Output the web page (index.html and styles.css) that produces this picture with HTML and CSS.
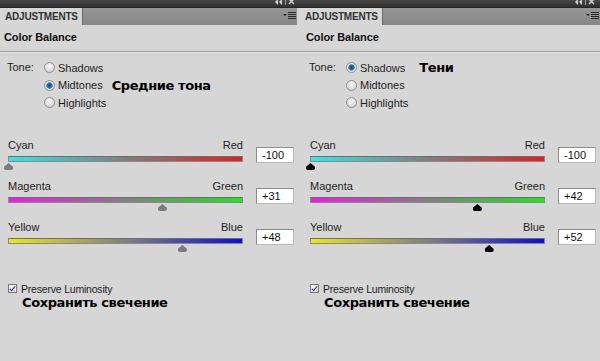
FILE: index.html
```html
<!DOCTYPE html>
<html>

<head>
	<meta charset="UTF-8">
	<title>Color Balance</title>
	<link rel="stylesheet" href="styles.css">
</head>

<body>
	<div class="screens">
		<!-- левая панель: средние тона -->
		<section class="panel panel-left">
			<div class="titlebar">
				<svg class="win-icons" width="24" height="7" viewBox="0 0 24 7">
					<path d="M4 0 L1 -3 L4 -6 Z M8 0 L5 -3 L8 -6 Z" fill="#d0d0d0" transform="translate(0 5)" />
					<rect x="11" y="0" width="1" height="5" fill="#9a9a9a" />
					<path d="M15 0 L20 5 M20 0 L15 5" stroke="#d0d0d0" stroke-width="1.4" transform="translate(0 -1)" />
				</svg>
			</div>
			<div class="tabrow">
				<div class="tab">ADJUSTMENTS</div>
				<div class="tabfill">
					<svg class="menu-icon" width="13" height="9" viewBox="0 0 13 9">
						<path d="M0 2 L4 2 L2 4 Z" fill="#222" />
						<rect x="5" y="0" width="8" height="1" fill="#2a2a2a" />
						<rect x="5" y="2" width="8" height="1" fill="#2a2a2a" />
						<rect x="5" y="4" width="8" height="1" fill="#2a2a2a" />
						<rect x="5" y="6" width="8" height="1" fill="#2a2a2a" />
					</svg>
				</div>
			</div>
			<div class="content">
				<h2 class="heading">Color Balance</h2>
				<div class="separator"></div>

				<div class="tone">
					<span class="tone-label">Tone:</span>
					<div class="tone-options">
						<label class="option"><span class="radio"></span>Shadows</label>
						<label class="option"><span class="radio checked"></span>Midtones<span class="hint">Средние тона</span></label>
						<label class="option"><span class="radio"></span>Highlights</label>
					</div>
				</div>

				<div class="slider">
					<div class="slider-main">
						<div class="ends"><span>Cyan</span><span>Red</span></div>
						<div class="bar bar-cr"></div>
						<div class="track"><span class="thumb" style="left: 0%"></span></div>
					</div>
					<div class="value">-100</div>
				</div>
				<div class="slider">
					<div class="slider-main">
						<div class="ends"><span>Magenta</span><span>Green</span></div>
						<div class="bar bar-mg"></div>
						<div class="track"><span class="thumb" style="left: 65.5%"></span></div>
					</div>
					<div class="value">+31</div>
				</div>
				<div class="slider">
					<div class="slider-main">
						<div class="ends"><span>Yellow</span><span>Blue</span></div>
						<div class="bar bar-yb"></div>
						<div class="track"><span class="thumb" style="left: 74%"></span></div>
					</div>
					<div class="value">+48</div>
				</div>

				<label class="preserve"><span class="checkbox"></span>Preserve Luminosity</label>
				<p class="translation">Сохранить свечение</p>
			</div>
		</section>

		<!-- правая панель: тени -->
		<section class="panel panel-right">
			<div class="titlebar">
				<svg class="win-icons" width="24" height="7" viewBox="0 0 24 7">
					<path d="M4 0 L1 -3 L4 -6 Z M8 0 L5 -3 L8 -6 Z" fill="#d0d0d0" transform="translate(0 5)" />
					<rect x="11" y="0" width="1" height="5" fill="#9a9a9a" />
					<path d="M15 0 L20 5 M20 0 L15 5" stroke="#d0d0d0" stroke-width="1.4" transform="translate(0 -1)" />
				</svg>
			</div>
			<div class="tabrow">
				<div class="tab">ADJUSTMENTS</div>
				<div class="tabfill">
					<svg class="menu-icon" width="13" height="9" viewBox="0 0 13 9">
						<path d="M0 2 L4 2 L2 4 Z" fill="#222" />
						<rect x="5" y="0" width="8" height="1" fill="#2a2a2a" />
						<rect x="5" y="2" width="8" height="1" fill="#2a2a2a" />
						<rect x="5" y="4" width="8" height="1" fill="#2a2a2a" />
						<rect x="5" y="6" width="8" height="1" fill="#2a2a2a" />
					</svg>
				</div>
			</div>
			<div class="content">
				<h2 class="heading">Color Balance</h2>
				<div class="separator"></div>

				<div class="tone">
					<span class="tone-label">Tone:</span>
					<div class="tone-options">
						<label class="option"><span class="radio checked"></span>Shadows<span class="hint">Тени</span></label>
						<label class="option"><span class="radio"></span>Midtones</label>
						<label class="option"><span class="radio"></span>Highlights</label>
					</div>
				</div>

				<div class="slider">
					<div class="slider-main">
						<div class="ends"><span>Cyan</span><span>Red</span></div>
						<div class="bar bar-cr"></div>
						<div class="track"><span class="thumb dark" style="left: 0%"></span></div>
					</div>
					<div class="value">-100</div>
				</div>
				<div class="slider">
					<div class="slider-main">
						<div class="ends"><span>Magenta</span><span>Green</span></div>
						<div class="bar bar-mg"></div>
						<div class="track"><span class="thumb dark" style="left: 71%"></span></div>
					</div>
					<div class="value">+42</div>
				</div>
				<div class="slider">
					<div class="slider-main">
						<div class="ends"><span>Yellow</span><span>Blue</span></div>
						<div class="bar bar-yb"></div>
						<div class="track"><span class="thumb dark" style="left: 76%"></span></div>
					</div>
					<div class="value">+52</div>
				</div>

				<label class="preserve"><span class="checkbox"></span>Preserve Luminosity</label>
				<p class="translation">Сохранить свечение</p>
			</div>
		</section>
	</div>
</body>

</html>
```

FILE: styles.css
```css
body {
	margin: 0;
	background: #d6d6d6;
	font-family: "Liberation Sans", Arial, sans-serif;
	font-size: 11px;
	color: #1e1e1e;
}

.screens {
	display: flex;
	width: 600px;
	height: 361px;
	overflow: hidden;
}

.panel {
	width: 300px;
	flex: none;
	background: #d6d6d6;
}

/* верхняя тёмная полоса */
.titlebar {
	height: 7px;
	background: linear-gradient(#474747, #2f2f2f);
	display: flex;
	justify-content: flex-end;
	overflow: hidden;
}

.win-icons {
	margin-right: 2px;
}

.tabrow {
	height: 18px;
	display: flex;
	border-top: 1px solid #262626;
	box-sizing: border-box;
}

.tab {
	width: 82px;
	flex: none;
	background: #d6d6d6;
	font-weight: bold;
	font-size: 10px;
	color: #333;
	padding-left: 5px;
	line-height: 17px;
	box-sizing: border-box;
	letter-spacing: -0.2px;
	white-space: nowrap;
	overflow: hidden;
}

.tabfill {
	flex: 1;
	background: linear-gradient(#969696, #878787);
	border-left: 1px solid #6a6a6a;
	display: flex;
	justify-content: flex-end;
	align-items: center;
}

.panel-left .tabfill {
	margin-right: 3px;
}

.menu-icon {
	margin-right: 1px;
}

.panel-right .content {
	padding-left: 2px;
}

.heading {
	margin: 0;
	padding: 6px 0 0 4px;
	height: 20px;
	font-size: 11px;
	line-height: 12px;
	font-weight: bold;
	color: #111;
	letter-spacing: -0.1px;
}

.separator {
	height: 1px;
	background: #9c9c9c;
	border-bottom: 1px solid #e6e6e6;
	margin: 0 0 6px 0;
}

.panel-right .separator {
	margin-left: -2px;
}

/* выбор тона */
.tone {
	display: flex;
	padding-left: 7px;
	height: 80px;
}

.tone-label {
	width: 37px;
	line-height: 17px;
}

.tone-options {
	display: flex;
	flex-direction: column;
}

.option {
	display: flex;
	align-items: center;
	height: 17.5px;
}

.radio {
	width: 11px;
	height: 11px;
	border-radius: 50%;
	box-sizing: border-box;
	border: 1px solid #8f8f8f;
	background: radial-gradient(circle at 50% 35%, #fafafa, #d8d8d8 70%, #c4c4c4);
	margin-right: 3px;
}

.radio.checked {
	background: radial-gradient(circle at 50% 50%, #0f4679 0, #1d6bb0 2px, #5b93c8 3px, #eaeaea 3.6px, #d4d4d4 100%);
}

.hint {
	font-family: "DejaVu Sans", sans-serif;
	font-weight: bold;
	font-size: 13px;
	color: #000;
	margin-left: 9px;
	letter-spacing: -0.4px;
}

.panel-right .hint {
	margin-left: 14px;
}

/* ползунки */
.slider {
	display: flex;
	padding-left: 8px;
	height: 41px;
}

.slider-main {
	width: 235px;
}

.ends {
	display: flex;
	justify-content: space-between;
	line-height: 13px;
	height: 13px;
	margin-bottom: 4px;
}

.bar {
	height: 6px;
	box-sizing: border-box;
	border: 1px solid #8a8a8a;
	border-top-color: #6e6e6e;
}

.bar-cr {
	background: linear-gradient(to right, #2fe8e8, #7f7f7f 50%, #ea1a1a);
}

.bar-mg {
	background: linear-gradient(to right, #ea1ee6, #808080 50%, #1ee41e);
}

.bar-yb {
	background: linear-gradient(to right, #eaea10, #808080 50%, #0c0cdc);
}

.track {
	position: relative;
	height: 8px;
}

/* бегунок поверх шкалы */
.thumb {
	position: absolute;
	top: 1px;
	width: 9px;
	height: 7px;
	margin-left: -4px;
	background: #7c7c7c;
	clip-path: polygon(50% 0, 100% 55%, 100% 85%, 85% 100%, 15% 100%, 0 85%, 0 55%);
}

.thumb.dark {
	background: #050505;
}

.value {
	width: 38px;
	height: 16px;
	margin: 8px 0 0 13px;
	box-sizing: border-box;
	background: #fff;
	border: 1px solid #b8b8b8;
	border-top-color: #8c8c8c;
	border-left-color: #8c8c8c;
	padding-left: 5px;
	line-height: 14px;
	color: #111;
}

/* сохранить яркость */
.preserve {
	display: flex;
	align-items: center;
	padding: 22px 0 0 8px;
	height: 9px;
	font-size: 10.5px;
	letter-spacing: -0.2px;
}

.checkbox {
	width: 9px;
	height: 9px;
	box-sizing: border-box;
	border: 1px solid #7a7a7a;
	background: linear-gradient(#f4f4f4, #dcdcdc);
	margin-right: 4px;
	position: relative;
}

.checkbox::after {
	content: "";
	position: absolute;
	left: 2px;
	top: 0px;
	width: 2px;
	height: 5px;
	border: solid #2a3a7a;
	border-width: 0 1.5px 1.5px 0;
	transform: rotate(40deg);
}

.translation {
	margin: 0;
	padding: 2px 0 0 22px;
	font-family: "DejaVu Sans", sans-serif;
	font-weight: bold;
	font-size: 13px;
	line-height: 16px;
	color: #000;
	letter-spacing: -0.4px;
}
```
